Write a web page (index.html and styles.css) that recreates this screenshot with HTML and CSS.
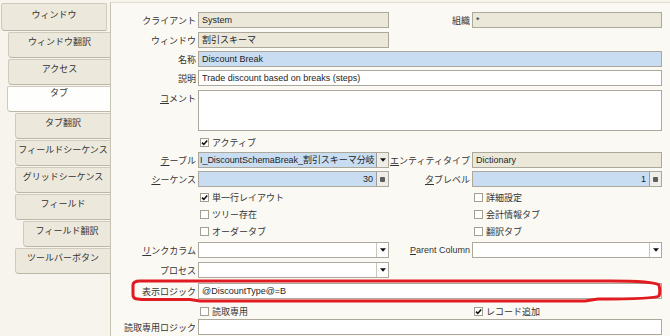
FILE: index.html
```html
<!DOCTYPE html>
<html lang="ja">
<head>
    <meta charset="UTF-8">
    <title>タブ - 割引スキーマ</title>
    <link rel="stylesheet" href="styles.css">
</head>
<body>
    <div class="window">
        <nav class="tabs">
            <div class="tab tab-root">ウィンドウ</div>
            <div class="tab">ウィンドウ翻訳</div>
            <div class="tab">アクセス</div>
            <div class="tab tab-active">タブ</div>
            <div class="tab tab-child">タブ翻訳</div>
            <div class="tab tab-child">フィールドシーケンス</div>
            <div class="tab tab-child">グリッドシーケンス</div>
            <div class="tab tab-child">フィールド</div>
            <div class="tab tab-grandchild">フィールド翻訳</div>
            <div class="tab tab-child">ツールバーボタン</div>
        </nav>

        <main class="panel">
            <div class="form">
                <span class="label">クライアント</span>
                <div class="field readonly">System</div>
                <span class="label label-right">組織</span>
                <div class="field readonly">*</div>

                <span class="label">ウィンドウ</span>
                <div class="field readonly">割引スキーマ</div>

                <span class="label">名称</span>
                <div class="field mandatory wide">Discount Break</div>

                <span class="label">説明</span>
                <div class="field wide">Trade discount based on breaks (steps)</div>

                <span class="label label-top"><u>コ</u>メント</span>
                <div class="field area wide"></div>

                <div class="check">
                    <span class="box"><svg viewBox="0 0 7 7"><path d="M1 3.6 L2.8 5.4 L6.2 1.4"/></svg></span>アクティブ
                </div>

                <span class="label"><u>テ</u>ーブル</span>
                <div class="field combo mandatory">
                    <span class="combo-text table-name">I_DiscountSchemaBreak_割引スキーマ分岐</span>
                    <span class="combo-btn raised"><svg viewBox="0 0 7 4"><polygon points="0,0 7,0 3.5,4"/></svg></span>
                </div>
                <span class="label label-right"><u>エ</u>ンティティタイプ</span>
                <div class="field readonly">Dictionary</div>

                <span class="label"><u>シ</u>ーケンス</span>
                <div class="field combo mandatory">
                    <span class="combo-text number">30</span>
                    <span class="combo-btn raised"><span class="calc"></span></span>
                </div>
                <span class="label label-right"><u>タ</u>ブレベル</span>
                <div class="field combo mandatory">
                    <span class="combo-text number">1</span>
                    <span class="combo-btn raised"><span class="calc"></span></span>
                </div>

                <div class="check">
                    <span class="box"><svg viewBox="0 0 7 7"><path d="M1 3.6 L2.8 5.4 L6.2 1.4"/></svg></span>単一行レイアウト
                </div>
                <div class="check check-right"><span class="box"></span>詳細設定</div>

                <div class="check"><span class="box"></span>ツリー存在</div>
                <div class="check check-right"><span class="box"></span>会計情報タブ</div>

                <div class="check"><span class="box"></span>オーダータブ</div>
                <div class="check check-right"><span class="box"></span>翻訳タブ</div>

                <span class="label"><u>リ</u>ンクカラム</span>
                <div class="field combo">
                    <span class="combo-text"></span>
                    <span class="combo-btn"><svg viewBox="0 0 7 4"><polygon points="0,0 7,0 3.5,4"/></svg></span>
                </div>
                <span class="label label-right"><u>P</u>arent Column</span>
                <div class="field combo">
                    <span class="combo-text"></span>
                    <span class="combo-btn"><svg viewBox="0 0 7 4"><polygon points="0,0 7,0 3.5,4"/></svg></span>
                </div>

                <span class="label">プロセス</span>
                <div class="field combo">
                    <span class="combo-text"></span>
                    <span class="combo-btn"><svg viewBox="0 0 7 4"><polygon points="0,0 7,0 3.5,4"/></svg></span>
                </div>

                <span class="label">表示ロジック</span>
                <div class="field wide">@DiscountType@=B</div>

                <div class="check"><span class="box"></span>読取専用</div>
                <div class="check check-right">
                    <span class="box"><svg viewBox="0 0 7 7"><path d="M1 3.6 L2.8 5.4 L6.2 1.4"/></svg></span>レコード追加
                </div>

                <span class="label">読取専用ロジック</span>
                <div class="field wide"></div>
            </div>
        </main>

        <!-- hand-drawn marker around the display logic row -->
        <svg class="marker" viewBox="0 0 670 336">
            <path d="M133 285 C133 282 135 281 140 281 L610 281 C640 281 655 282 659 285 C660 289 660 293 659 296 C657 298 640 299 598 299 L585 301 L200 301 L190 299.5 L145 299.5 C137 299.5 133 299 133 295 Z"/>
        </svg>
    </div>
</body>
</html>
```

FILE: styles.css
```css
:root {
    --bg: #f7f4ed;
    --panel: #fbf9f4;
    --tab: #ece8dc;
    --tab-border: #cfcabc;
    --field-border: #aca99c;
    --readonly: #ebe8da;
    --mandatory: #c9ddf2;
    --text: #1e1e1e;
    --label: #333;
    --marker: #e01b22;
}

body {
    margin: 0;
    font-family: 'Liberation Sans', 'Noto Sans CJK JP', sans-serif;
    font-size: 9px;
    color: var(--text);
    background-color: var(--bg);
}

.window {
    position: relative;
    display: flex;
    height: 336px;
    overflow: hidden;
}

/* Left tab strip */
.tabs {
    width: 110px;
    flex: none;
    padding-top: 3px;
    display: flex;
    flex-direction: column;
    gap: 1px;
}

.tab {
    height: 26px;
    margin-left: 8px;
    box-sizing: border-box;
    padding-top: 3px;
    line-height: 12px;
    text-align: center;
    white-space: nowrap;
    color: var(--label);
    background-color: var(--tab);
    border: 1px solid var(--tab-border);
    border-right: none;
    border-bottom-color: #bbb6a6;
    border-radius: 2px 0 0 4px;
}

.tab-root {
    height: 28px;
    margin-left: 1px;
    margin-right: 3px;
    padding-top: 5px;
    border-right: 1px solid var(--tab-border);
    border-radius: 2px 2px 2px 4px;
}

.tab-active {
    margin-left: 7px;
    padding-top: 0;
    background-color: #fefefc;
}

.tab-child {
    margin-left: 15px;
}

.tab-grandchild {
    margin-left: 23px;
}

/* Right panel */
.panel {
    flex: 1;
    margin-top: 2px;
    padding-top: 9px;
    background-color: var(--panel);
    border-left: 1px solid #c6c2b4;
    border-top: 1px solid #e2ded3;
}

.form {
    display: grid;
    grid-template-columns: 87px 191px 83px 190px;
    grid-template-rows: 20px 19px 19px 20px 45px 17px 19px 19px 17px 17px 18px 20px 21px 21px 15px 17px;
    align-items: start;
}

.label {
    grid-column: 1;
    display: flex;
    justify-content: flex-end;
    align-items: center;
    height: 16px;
    padding-right: 2px;
    white-space: nowrap;
    color: var(--label);
}

.label-right {
    grid-column: 3;
}

.label-top {
    align-items: flex-start;
    padding-top: 2px;
}

.label u {
    text-underline-offset: 1px;
}

.field {
    height: 16px;
    box-sizing: border-box;
    padding: 0 3px;
    line-height: 14px;
    white-space: nowrap;
    overflow: hidden;
    background-color: #fff;
    border: 1px solid var(--field-border);
}

.wide {
    grid-column: 2 / 5;
}

.area {
    height: 41px;
}

.readonly {
    background-color: var(--readonly);
}

.mandatory {
    background-color: var(--mandatory);
}

.combo {
    display: flex;
    padding: 0;
}

.combo-text {
    flex: 1;
    min-width: 0;
    overflow: hidden;
    padding: 0 2px;
}

.combo-text:empty {
    padding: 0;
}

.table-name {
    padding: 0 0 0 1px;
    letter-spacing: -0.05px;
}

.number {
    text-align: right;
    padding-right: 3px;
}

.combo-btn {
    width: 11px;
    flex: none;
    display: flex;
    align-items: center;
    justify-content: center;
    border-left: 1px solid #c9c6bb;
    background-color: #fff;
}

.combo-btn.raised {
    background-color: #eeede8;
    border-left-color: #9e9c94;
}

.combo-btn svg {
    width: 6px;
    height: 4px;
    fill: #111;
}

.calc {
    width: 5px;
    height: 5px;
    background-color: #5e5e5e;
    border-radius: 1px;
}

/* Check boxes */
.check {
    grid-column: 2;
    display: flex;
    align-items: center;
    gap: 3px;
    height: 10px;
    margin: 2px 0 0 2px;
    white-space: nowrap;
    color: var(--label);
}

.check-right {
    grid-column: 4;
}

.box {
    width: 9px;
    height: 9px;
    flex: none;
    display: flex;
    align-items: center;
    justify-content: center;
    box-sizing: border-box;
    background-color: #fff;
    border: 1px solid #a3a093;
}

.box svg {
    width: 7px;
    height: 7px;
    fill: none;
    stroke: #111;
    stroke-width: 1.6;
}

/* Red hand drawn marker */
.marker {
    position: absolute;
    top: 0;
    left: 0;
    width: 670px;
    height: 336px;
    pointer-events: none;
}

.marker path {
    fill: none;
    stroke: var(--marker);
    stroke-width: 3;
    stroke-linejoin: round;
}
```
